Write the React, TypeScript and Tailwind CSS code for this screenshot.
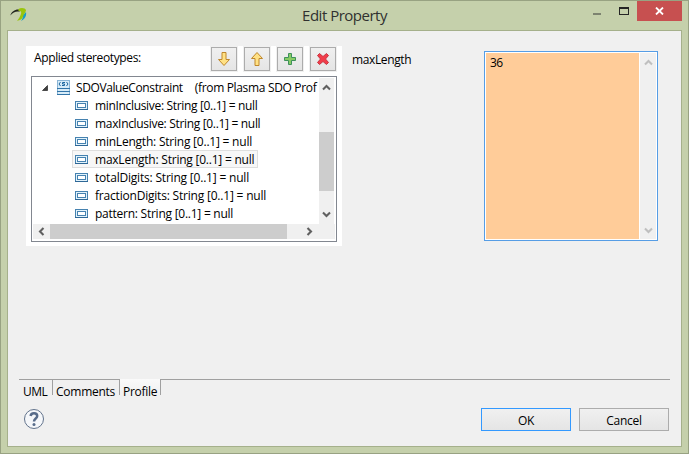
import React from "react";

const attributes = [
  { name: "minInclusive", track: "tracking-[-0.33px]" },
  { name: "maxInclusive", track: "tracking-[-0.32px]" },
  { name: "minLength", track: "tracking-[-0.22px]" },
  { name: "maxLength", track: "tracking-[-0.23px]", selected: true },
  { name: "totalDigits", track: "tracking-[-0.2px]" },
  { name: "fractionDigits", track: "tracking-[-0.2px]" },
  { name: "pattern", track: "tracking-[-0.25px]" },
];

function AppLogo() {
  return (
    <svg className="mt-[6px] ml-[9px]" width="18" height="16" viewBox="0 0 18 16">
      <path d="M.3 8.500C1.500 4.500 5 2 9.500 2.500L9.500 4.700C5.500 4.200 3 5.500 .3 8.500Z" fill="#20251d" />
      <path d="M13 7.500C14.500 7 15 6 16 5C16.800 9 14.500 12.500 11 14C12.500 12 13 10 13 7.500Z" fill="#1a9fc4" />
      <path d="M8.500 2C11 .2 15.500 .8 16 3.300C15.500 6 13.500 7.500 13 9.500C12.500 12 10 13.300 7 13.800C9.500 11.500 12 6 11 4.500C10.500 3.800 9.500 3.800 8.500 4Z" fill="#9ac50c" />
    </svg>
  );
}

function Chevron({ dir, color = "#606060" }: { dir: "up" | "down" | "left" | "right"; color?: string }) {
  const paths = {
    up: "M1 6.500L4.500 3L8 6.500",
    down: "M1 2.500L4.500 6L8 2.500",
    left: "M6.500 1L3 4.500L6.500 8",
    right: "M2.500 1L6 4.500L2.500 8",
  };
  return (
    <svg width="9" height="9" viewBox="0 0 9 9">
      <path d={paths[dir]} fill="none" stroke={color} strokeWidth="2.100" />
    </svg>
  );
}

function ToolButton({ children }: { children: React.ReactNode }) {
  return (
    <div className="h-[26px] w-7 bg-[#f0f0f0] p-px">
      <button className="flex h-6 w-[26px] items-center justify-center border border-[#acacac] bg-linear-to-b from-[#f0f0f0] to-[#e5e5e5]">
        <svg width="16" height="16" viewBox="0 0 16 16">{children}</svg>
      </button>
    </div>
  );
}

function AttributeIcon() {
  return (
    <svg className="shrink-0" width="13" height="9" viewBox="0 0 13 9">
      <rect x=".5" y=".5" width="12" height="8" fill="#e2f3fc" stroke="#4682b0" />
      <rect x="2.500" y="2.500" width="8" height="4" fill="#fff" stroke="#4682b0" />
      <path d="M0 8.500H13" stroke="#2e6796" />
    </svg>
  );
}

function StereotypeIcon() {
  return (
    <svg width="13" height="15" viewBox="0 0 13 15">
      <rect width="13" height="15" fill="#d8ecf8" />
      <rect x=".5" y=".5" width="12" height="14" fill="none" stroke="#8ab5d6" />
      <path d="M0 8.500H13M0 11.500H13M0 14.500H13" stroke="#3274a8" />
      <path d="M3.500 2L2 4L3.500 6M9.500 2L11 4L9.500 6M8 2.500H5.500V4H7.500V5.500H5" fill="none" stroke="#1d669f" />
    </svg>
  );
}

function TitleBar() {
  return (
    <header className="flex h-[29px] items-start">
      <div className="w-[100px]"><AppLogo /></div>
      <h1 className="ml-[142px] w-[203px] pt-[3px] text-center text-[15px] leading-[22px] tracking-[-0.5px] whitespace-nowrap text-[#303030]">Edit Property</h1>
      <div className="ml-auto flex pr-[6px]">
        <div className="mt-[12px] mr-[18px] h-[2px] w-[8px] bg-[#7d8370]" />
        <div className="mt-[6px] mr-[8px] h-[8px] w-[10px] border border-t-2 border-[#252525]" />
        <button className="flex h-5 w-[45px] items-center justify-center bg-[#c75050]">
          <svg width="9" height="8" viewBox="0 0 9 8"><path d="M1 .5L8 7.500M8 .5L1 7.500" stroke="white" strokeWidth="1.800" /></svg>
        </button>
      </div>
    </header>
  );
}

function Tree() {
  return (
    <div className="mx-[5px] mt-1 flex h-[166px] w-[306px] flex-col border border-[#828790] p-px">
      <div className="flex h-[146px]">
        <div className="w-[286px] shrink-0 overflow-hidden">
          <div className="flex h-[18px] items-center pl-[9px] whitespace-nowrap">
            <svg className="mt-[2px] shrink-0" width="6" height="6" viewBox="0 0 6 6"><path d="M5.500 .5V5.500H.5Z" fill="#404040" stroke="#262626" strokeWidth=".7" /></svg>
            <span className="ml-[9px] shrink-0"><StereotypeIcon /></span>
            <span className="ml-[6px] shrink-0 pt-[2px] tracking-[-0.4px]">SDOValueConstraint</span>
            <span className="ml-[12px] shrink-0 pt-[2px] tracking-[-0.33px]">(from Plasma SDO Prof</span>
          </div>
          {attributes.map((a) => (
            <div
              key={a.name}
              className={`ml-[39px] flex h-[18px] w-fit items-center border pr-[3px] pl-[2px] whitespace-nowrap ${a.selected ? "border-[#dedede] bg-[#f7f7f7]" : "border-transparent"}`}
            >
              <AttributeIcon />
              <span className={`ml-[7px] pt-[2px] ${a.track}`}>{a.name}: String [0..1] = null</span>
            </div>
          ))}
        </div>
        <div className="flex w-[15px] flex-col items-center bg-[#f0f0f0] pt-[5px]">
          <Chevron dir="up" />
          <div className="mt-[40px] h-[59px] w-full bg-[#cdcdcd]" />
          <div className="mt-[19px]"><Chevron dir="down" /></div>
        </div>
      </div>
      <div className="flex h-[15px] items-center bg-[#f0f0f0]">
        <div className="w-[17px] pl-1"><Chevron dir="left" /></div>
        <div className="h-full w-[237px] bg-[#cdcdcd]" />
        <div className="ml-[18px]"><Chevron dir="right" /></div>
      </div>
    </div>
  );
}

export default function App() {
  return (
    <div className="flex h-[454px] w-[689px] flex-col border border-[#98a282] bg-[#c5d0ab] font-['Open_Sans','Noto_Sans',sans-serif] text-[12px] leading-4 text-black">
      <TitleBar />
      <main className="mx-[6px] flex h-[417px] flex-col border border-[#a5b08b] bg-[#f0f0f0]">
        <div className="flex h-[348px] pt-[15px] pl-[18px]">
          <section className="h-[200px] w-[316px] bg-white">
            <div className="flex h-[26px] gap-[5px]">
              <span className="w-[179px] pt-1 pl-2 tracking-[-0.38px]">Applied stereotypes:</span>
              <ToolButton>
                <path d="M6 1.500H10V8.500H13.500L8 14.500L2.500 8.500H6Z" fill="#ffe184" stroke="#bf872b" />
              </ToolButton>
              <ToolButton>
                <path d="M6 14.500H10V7.500H13.500L8 1.500L2.500 7.500H6Z" fill="#ffe184" stroke="#bf872b" />
              </ToolButton>
              <ToolButton>
                <path d="M6.500 2.500H9.500V6.500H13.500V9.500H9.500V13.500H6.500V9.500H2.500V6.500H6.500Z" fill="#88cb63" stroke="#3e915b" />
              </ToolButton>
              <ToolButton>
                <path d="M4.500 2.500L8 5.500L11.500 2.500L13.500 4.500L10.500 8L13.500 11.500L11.500 13.500L8 10.500L4.500 13.500L2.500 11.500L5.500 8L2.500 4.500Z" fill="#f13c49" stroke="#c83340" strokeLinejoin="round" />
              </ToolButton>
            </div>
            <Tree />
          </section>
          <label className="ml-[10px] w-[132px] pt-[6px] tracking-[-0.38px]">maxLength</label>
          <div className="mt-[5px] flex h-[190px] w-[174px] gap-px border border-[#569de5] bg-white p-px">
            <div className="w-[153px] bg-[#ffcc99] pt-[2px] pl-1 tracking-[-0.5px]">36</div>
            <div className="flex w-4 flex-col items-center justify-between bg-[#f0f0f0] pt-[5px] pb-1">
              <Chevron dir="up" color="#bfbfbf" />
              <Chevron dir="down" color="#bfbfbf" />
            </div>
          </div>
        </div>
        <nav className="mx-[11px] flex h-4">
          <div className="w-[34px] border-t border-r border-[#a0a0a0] pt-1 pl-1 tracking-[-0.5px]">UML</div>
          <div className="w-[67px] border-t border-r border-[#a0a0a0] pt-1 pl-[3px] tracking-[-0.25px]">Comments</div>
          <div className="w-[41px] border-r border-[#a0a0a0] bg-linear-to-b from-[#fafafa] to-[#f0f0f0] pt-[5px] pl-[3px] tracking-[-0.3px]">Profile</div>
          <div className="flex-1 border-t border-[#a0a0a0]" />
        </nav>
        <footer className="mt-[13px] flex pr-[12px] pl-[15px]">
          <svg width="22" height="22" viewBox="0 0 22 22">
            <circle cx="11" cy="11" r="9.500" fill="#f5f7fa" stroke="#62738c" />
            <path d="M7.600 8C8 4.300 14.200 4.500 14.200 8C14.200 10.500 11 10.500 11 13.500" fill="none" stroke="#586c8a" strokeWidth="2.500" />
            <circle cx="11" cy="16.500" r="1.500" fill="#586c8a" />
          </svg>
          <div className="ml-auto flex gap-2">
            <button className="h-[23px] w-[90px] border border-[#3399ff] bg-linear-to-b from-[#f0f0f0] to-[#e5e5e5] pt-[2px] tracking-[-0.4px]">OK</button>
            <button className="h-[23px] w-[90px] border border-[#acacac] bg-linear-to-b from-[#f0f0f0] to-[#e5e5e5] pt-[2px] tracking-[-0.25px]">Cancel</button>
          </div>
        </footer>
      </main>
    </div>
  );
}
